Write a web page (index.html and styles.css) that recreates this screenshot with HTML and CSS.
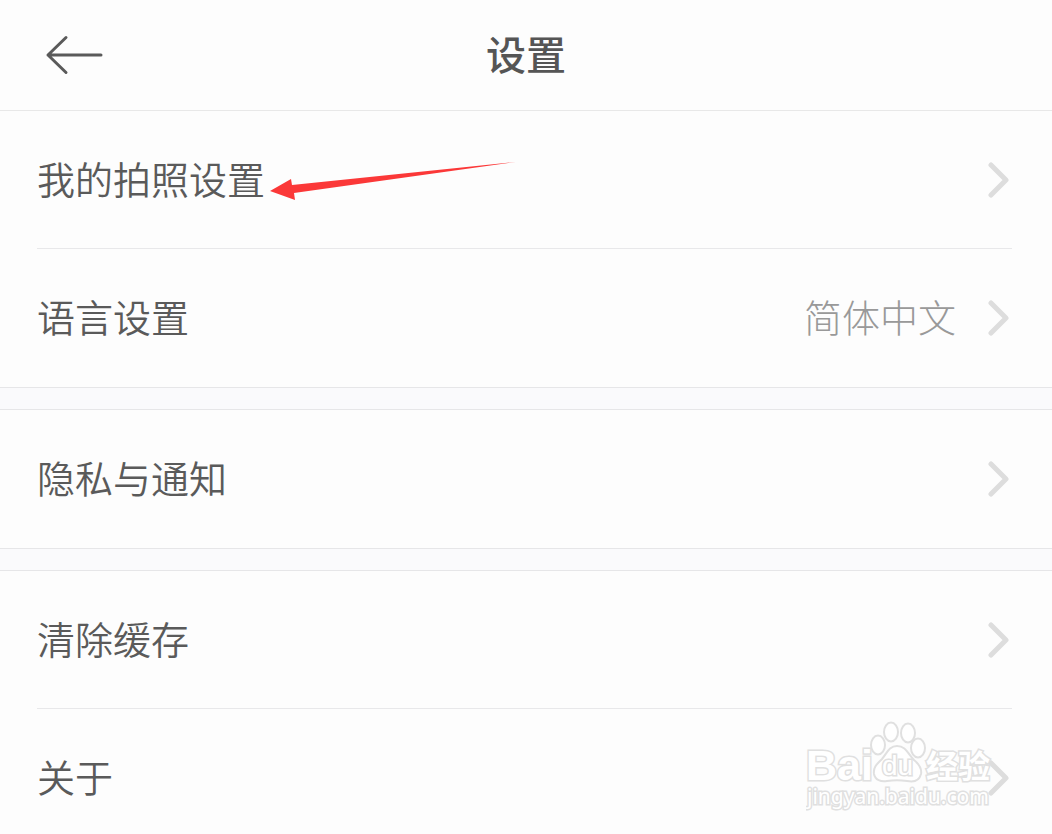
FILE: index.html
```html
<!DOCTYPE html>
<html lang="zh-CN">
<head>
    <meta charset="UTF-8">
    <meta name="viewport" content="width=device-width, initial-scale=1.0">
    <title>设置</title>
    <link rel="stylesheet" href="styles.css">
</head>
<body>
    <header class="header">
        <button class="back" type="button" aria-label="返回">
            <svg width="60" height="40" viewBox="0 0 60 40">
                <path d="M22 2.5L4 20l18 17.5M4 20h53"/>
            </svg>
        </button>
        <h1>设置</h1>
    </header>

    <main class="settings">
        <!-- General -->
        <section class="group">
            <a class="row" href="#camera">
                <span class="label">我的拍照设置</span>
                <svg class="chevron" width="24" height="36" viewBox="0 0 24 36"><path d="M3 3l15 15L3 33"/></svg>
            </a>
            <a class="row" href="#language">
                <span class="label">语言设置</span>
                <span class="value">简体中文</span>
                <svg class="chevron" width="24" height="36" viewBox="0 0 24 36"><path d="M3 3l15 15L3 33"/></svg>
            </a>
        </section>

        <!-- Privacy -->
        <section class="group">
            <a class="row" href="#privacy">
                <span class="label">隐私与通知</span>
                <svg class="chevron" width="24" height="36" viewBox="0 0 24 36"><path d="M3 3l15 15L3 33"/></svg>
            </a>
        </section>

        <!-- Cache and about -->
        <section class="group">
            <a class="row" href="#cache">
                <span class="label">清除缓存</span>
                <svg class="chevron" width="24" height="36" viewBox="0 0 24 36"><path d="M3 3l15 15L3 33"/></svg>
            </a>
            <a class="row" href="#about">
                <span class="label">关于</span>
                <svg class="chevron" width="24" height="36" viewBox="0 0 24 36"><path d="M3 3l15 15L3 33"/></svg>
            </a>
        </section>
    </main>

    <!-- Red pointer over the first row -->
    <svg class="pointer" width="250" height="40" viewBox="0 0 250 40">
        <path d="M0 31L21 19l1 6L246 2 24 33l1 7z"/>
    </svg>

    <!-- Watermark -->
    <svg class="watermark" width="200" height="100" viewBox="0 0 200 100">
        <g class="paw">
            <ellipse cx="72" cy="25" rx="7" ry="9.5"/>
            <ellipse cx="85" cy="12" rx="7" ry="9.5"/>
            <ellipse cx="102" cy="13" rx="7" ry="9.5"/>
            <ellipse cx="112" cy="28" rx="7" ry="9.5"/>
            <path d="M91 26c9 0 11 8 17 14 6 5 8 9 7 14-2 8-9 8-14 7-7-1-13-1-20 0-6 1-12-1-13-7-1-7 3-10 8-15 5-6 7-13 15-13z"/>
        </g>
        <text class="brand" x="0" y="60" font-size="43">Bai</text>
        <text class="du" x="76" y="55" font-size="28">du</text>
        <text class="brand" x="120" y="58" font-size="32">经验</text>
        <text class="site" x="1" y="84" font-size="21">jingyan.baidu.com</text>
    </svg>
</body>
</html>
```

FILE: styles.css
```css
* {
    box-sizing: border-box;
}
body {
    margin: 0;
    height: 100vh;
    position: relative;
    overflow: hidden;
    background: #fafafc;
    color: #555;
    font-family: "Noto Sans CJK SC", sans-serif;
}
.header {
    display: grid;
    grid-template-columns: 64px 1fr 64px;
    align-items: center;
    height: 111px;
    padding: 0 44px;
    background: #fdfdfd;
    border-bottom: 1px solid #e8e8e8;
}
.header h1 {
    margin: 0;
    padding-bottom: 4px;
    font-size: 40px;
    font-weight: 500;
    line-height: 56px;
    text-align: center;
}
.back {
    display: flex;
    padding: 0;
    border: none;
    background: none;
    cursor: pointer;
}
.back svg {
    fill: none;
    stroke: #5a5a5a;
    stroke-width: 3;
    stroke-linecap: round;
    stroke-linejoin: round;
}
.settings {
    display: flex;
    flex-direction: column;
    gap: 21px;
}
.group {
    padding: 0 40px 0 37px;
    background: #fdfdfd;
    border-top: 1px solid #e6e6e8;
    border-bottom: 1px solid #e6e6e8;
}
.group:first-child {
    border-top: none;
}
.row {
    display: flex;
    align-items: center;
    gap: 32px;
    height: 138px;
    color: #5a5a5a;
    font-size: 38px;
    font-weight: 350;
    line-height: 56px;
    text-decoration: none;
}
.row:not(:last-child) {
    border-bottom: 1px solid #e8e8ea;
}
.label,
.value {
    padding-bottom: 4px;
}
.label {
    flex: 1;
}
.value {
    color: #999;
    font-weight: 300;
}
.chevron {
    fill: none;
    stroke: #ddd;
    stroke-width: 5;
    stroke-linecap: round;
    stroke-linejoin: round;
}
.pointer {
    position: absolute;
    left: 270px;
    top: 160px;
    fill: #fb3838;
}
.watermark {
    position: absolute;
    right: 46px;
    bottom: 14px;
    fill: #fff;
    stroke: #e0e0e0;
}
.paw {
    stroke-width: 2;
}
.watermark text {
    paint-order: stroke;
    stroke-width: 3;
}
.brand {
    font-family: "Liberation Sans", "Noto Sans CJK SC", sans-serif;
    font-weight: 700;
}
.du {
    font-family: "Liberation Sans", sans-serif;
}
.site {
    font-family: "Noto Sans", sans-serif;
}
```
